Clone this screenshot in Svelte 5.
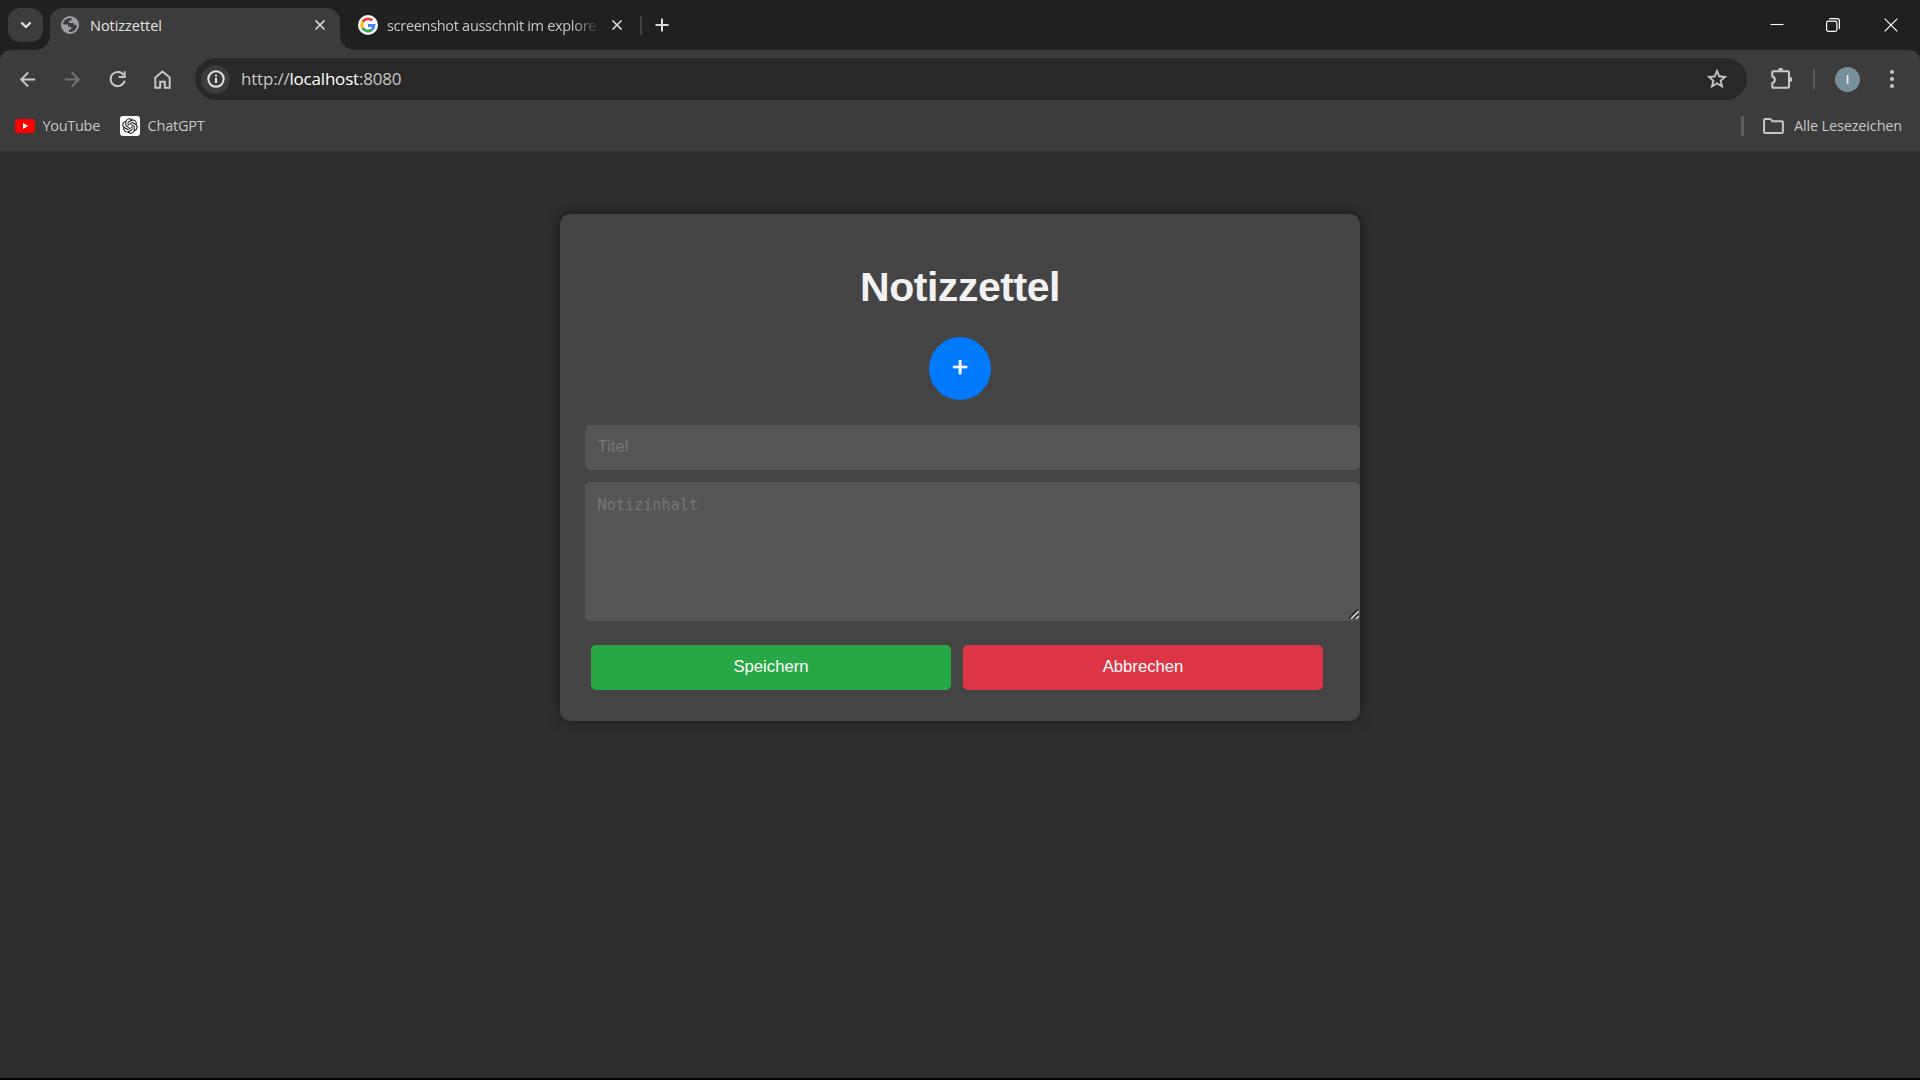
<script>
  let title = $state('');
  let content = $state('');
</script>

{#snippet cross()}
  <svg width="12" height="12" viewBox="0 0 12 12"><path d="M1.5 1.5l9 9M10.5 1.5l-9 9" fill="none" stroke="#dadada" stroke-width="1.7" /></svg>
{/snippet}

<div class="window">
  <header class="strip">
    <button class="search" aria-label="Tabs durchsuchen">
      <svg width="12" height="8" viewBox="0 0 12 8"><path d="M1.4 1.4L6 6l4.600-4.600" fill="none" stroke="#e3e3e3" stroke-width="2.1" /></svg>
    </button>
    <div class="tab active">
      <svg class="globe" width="18" height="18" viewBox="0 0 18 18">
        <circle cx="9" cy="9" r="9" fill="#9aa0a6" />
        <path d="M10.500 2C7 1.400 3 3.700 2 7.500l1 .9h4v2.300h3.200v2.500l-2.200.8v2A7 7 0 0 0 16 9.500l-1-.8h-2.300V6.900H8V4.500h2.500z" fill="#3c3c3c" />
      </svg>
      <span class="label t1">Notizzettel</span>
      {@render cross()}
    </div>
    <div class="tab other">
      <svg class="google" width="20" height="20" viewBox="0 0 20 20">
        <circle cx="10" cy="10" r="10" fill="#fff" />
        <g fill="none" stroke-width="2.800">
          <path d="M14.300 5.500A6.100 6.100 0 0 0 4.700 7" stroke="#ea4335" />
          <path d="M4.700 7a6.100 6.100 0 0 0 0 6" stroke="#fbbc05" />
          <path d="M4.700 13a6.100 6.100 0 0 0 9.300 1.600" stroke="#34a853" />
          <path d="M14 14.600a6.100 6.100 0 0 0 2-4.100h-6" stroke="#4285f4" />
        </g>
      </svg>
      <span class="label t2">screenshot ausschnit im explore</span>
      {@render cross()}
    </div>
    <i class="tabsep"></i>
    <svg class="new" width="14" height="14" viewBox="0 0 14 14"><path d="M7 .5v13M.5 7h13" stroke="#dcdcdc" stroke-width="2" /></svg>
    <div class="controls">
      <svg width="14" height="14" viewBox="0 0 14 14"><path d="M.5 6.500h13" stroke="#fff" stroke-width="1.100" /></svg>
      <svg width="14" height="14" viewBox="0 0 14 14" fill="none" stroke="#fff"><rect x=".6" y="3.100" width="10.300" height="10.300" rx="1.800" stroke-width="1.200" /><path d="M3.300 1.100q.3-.5 1.200-.5H11A2.400 2.400 0 0 1 13.400 3v6.600q0 1-.6 1.300" stroke-width="1.200" /></svg>
      <svg width="14" height="14" viewBox="0 0 14 14"><path d="M.7.7l12.600 12.600M13.300.7L.7 13.300" stroke="#fff" stroke-width="1.200" /></svg>
    </div>
  </header>

  <div class="chrome">
    <nav class="toolbar">
      <svg class="ico" width="23" height="23" viewBox="0 0 24 24" fill="#c7c7c7"><path d="M20 11H7.830l5.590-5.590L12 4l-8 8 8 8 1.410-1.410L7.830 13H20z" /></svg>
      <svg class="ico" width="23" height="23" viewBox="0 0 24 24" fill="#757575"><path d="M4 11h12.170l-5.590-5.590L12 4l8 8-8 8-1.410-1.410L16.170 13H4z" /></svg>
      <svg class="ico" width="23" height="23" viewBox="0 0 23 23" fill="none" stroke="#c7c7c7" stroke-width="2"><path d="M17.700 7.200A7.100 7.100 0 1 0 18.600 12.700" /><path d="M18.700 3.200v5.800h-6" /></svg>
      <svg class="ico" width="23" height="23" viewBox="0 0 23 23" fill="none" stroke="#c7c7c7" stroke-width="2"><path d="M4.300 9.400l7.200-5.900 7.200 5.900v10.300h-4.900v-6H9.200v6H4.300z" /></svg>
      <div class="omnibox">
        <span class="info">
          <svg width="18" height="18" viewBox="0 0 18 18"><circle cx="9" cy="9" r="7.700" fill="none" stroke="#e3e3e3" stroke-width="2" /><path d="M8 7.800h2v5.200H8zM8 4.700h2v1.900H8z" fill="#e3e3e3" /></svg>
        </span>
        <span class="url"><span class="scheme">http://</span>localhost<span class="scheme">:8080</span></span>
        <svg class="star" width="24" height="24" viewBox="0 0 24 24" fill="#c7c7c7" stroke="#c7c7c7" stroke-width=".3"><path d="M22 9.240l-7.190-.62L12 2 9.190 8.630 2 9.240l5.460 4.730L5.820 21 12 17.270 18.180 21l-1.630-7.030zM12 15.400l-3.760 2.270 1-4.280-3.320-2.880 4.380-.38L12 6.100l1.710 4.040 4.380.38-3.320 2.880 1 4.280z" /></svg>
      </div>
      <svg class="puzzle" width="22" height="22" viewBox="0 0 22 22"><path d="M2.300 4.200q0-1 1-1H18q1 0 1 1v14.600q0 1-1 1H3.300q-1 0-1-1V15a3.400 3.400 0 0 0 0-6.600z" fill="none" stroke="#c7c7c7" stroke-width="2.100" stroke-linejoin="round" /><path d="M8 2.500a2.700 2.700 0 0 1 5.400 0zM19.500 8.800a2.700 2.700 0 0 1 0 5.400z" fill="#c7c7c7" /></svg>
      <i class="barsep"></i>
      <span class="avatar">I</span>
      <svg class="dots" width="4" height="20" viewBox="0 0 4 20" fill="#c7c7c7"><circle cx="2" cy="3" r="2" /><circle cx="2" cy="10" r="2" /><circle cx="2" cy="17" r="2" /></svg>
    </nav>
    <div class="bookmarks">
      <svg width="20" height="14" viewBox="0 0 20 14"><rect width="20" height="14" rx="3.200" fill="#f00" /><path d="M8 4l5.200 3L8 10z" fill="#fff" /></svg>
      <span class="b1">YouTube</span>
      <svg class="gpt" width="20" height="20" viewBox="0 0 20 20"><rect width="20" height="20" rx="3" fill="#fff" /><path transform="translate(2.300 2.300) scale(.642)" fill="#111" d="M22.2819 9.8211a5.9847 5.9847 0 0 0-.5157-4.9108 6.0462 6.0462 0 0 0-6.5098-2.9A6.0651 6.0651 0 0 0 4.9807 4.1818a5.9847 5.9847 0 0 0-3.9977 2.9 6.0462 6.0462 0 0 0 .7427 7.0966 5.98 5.98 0 0 0 .511 4.9107 6.051 6.051 0 0 0 6.5146 2.9001A5.9847 5.9847 0 0 0 13.2599 24a6.0557 6.0557 0 0 0 5.7718-4.2058 5.9894 5.9894 0 0 0 3.9977-2.9001 6.0557 6.0557 0 0 0-.7475-7.0729zm-9.022 12.6081a4.4755 4.4755 0 0 1-2.8764-1.0408l.1419-.0804 4.7783-2.7582a.7948.7948 0 0 0 .3927-.6813v-6.7369l2.02 1.1686a.071.071 0 0 1 .038.052v5.5826a4.504 4.504 0 0 1-4.4945 4.4944zm-9.6607-4.1254a4.4708 4.4708 0 0 1-.5346-3.0137l.142.0852 4.783 2.7582a.7712.7712 0 0 0 .7806 0l5.8428-3.3685v2.3324a.0804.0804 0 0 1-.0332.0615L9.74 19.9502a4.4992 4.4992 0 0 1-6.1408-1.6464zM2.3408 7.8956a4.485 4.485 0 0 1 2.3655-1.9728V11.6a.7664.7664 0 0 0 .3879.6765l5.8144 3.3543-2.0201 1.1685a.0757.0757 0 0 1-.071 0l-4.8303-2.7865A4.504 4.504 0 0 1 2.3408 7.872zm16.5963 3.8558L13.1038 8.364 15.1192 7.2a.0757.0757 0 0 1 .071 0l4.8303 2.7913a4.4944 4.4944 0 0 1-.6765 8.1042v-5.6772a.79.79 0 0 0-.407-.667zm2.0107-3.0231l-.142-.0852-4.7735-2.7818a.7759.7759 0 0 0-.7854 0L9.409 9.2297V6.8974a.0662.0662 0 0 1 .0284-.0615l4.8303-2.7866a4.4992 4.4992 0 0 1 6.6802 4.66zM8.3065 12.863l-2.02-1.1638a.0804.0804 0 0 1-.038-.0567V6.0742a4.4992 4.4992 0 0 1 7.3757-3.4537l-.142.0805L8.704 5.459a.7948.7948 0 0 0-.3927.6813zm1.0976-2.3654l2.602-1.4998 2.6069 1.4998v2.9994l-2.5974 1.4997-2.6067-1.4997Z" /></svg>
      <span class="b2">ChatGPT</span>
      <i class="marksep"></i>
      <svg class="folder" width="21" height="16" viewBox="0 0 21 16"><path d="M1.100 2.100q0-1 1-1h5.300l2.200 2.200h9.300q1 0 1 1v9.600q0 1-1 1H2.100q-1 0-1-1z" fill="none" stroke="#c7c7c7" stroke-width="2" stroke-linejoin="round" /></svg>
      <span class="b3">Alle Lesezeichen</span>
    </div>
  </div>

  <main>
    <section class="card">
      <h1>Notizzettel</h1>
      <button class="add">+</button>
      <input placeholder="Titel" bind:value={title} />
      <div class="field">
        <textarea placeholder="Notizinhalt" bind:value={content}></textarea>
        <svg class="grip" width="10" height="10" viewBox="0 0 10 10" fill="none"><path d="M0 9.500L9 .5M5 9.500l4.500-4.500" stroke="#1e1e1e" stroke-width="1.500" /><path d="M2 9.800L9.800 2M7 9.800L9.800 7" stroke="#cfcfcf" stroke-width="1.700" /></svg>
      </div>
      <div class="actions">
        <button class="save">Speichern</button>
        <button class="cancel">Abbrechen</button>
      </div>
    </section>
  </main>
</div>

<style>
  :global(body) { margin: 0; background: #000; overflow: hidden; }
  * { box-sizing: border-box; }
  svg, i { display: block; flex: none; }
  button { border: 0; padding: 0; }
  .window { width: 1920px; height: 1080px; display: flex; flex-direction: column; background: #1f2120; font-family: "Open Sans", "Noto Sans", sans-serif; font-size: 14.500px; color: #c7c7c7; white-space: nowrap; border-bottom: 2px solid #000; }

  .strip { height: 50px; display: flex; align-items: center; padding-left: 8px; flex: none; }
  .search { width: 35px; height: 34px; border-radius: 12px; background: #3c3c3c; display: grid; place-items: center; }
  .tab { display: flex; align-items: center; }
  .active { position: relative; align-self: flex-end; width: 290px; height: 42px; margin-left: 7px; padding: 0 14px 8px 11px; border-radius: 13px 13px 0 0; background: #3c3c3c; }
  .active::before, .active::after { content: ""; position: absolute; bottom: 0; width: 14px; height: 14px; }
  .active::before { left: -14px; background: radial-gradient(circle at 0 0, transparent 13.500px, #3c3c3c 14px); }
  .active::after { right: -14px; background: radial-gradient(circle at 100% 0, transparent 13.500px, #3c3c3c 14px); }
  .label { line-height: 24px; padding-top: 1px; }
  .t1 { margin-left: 11px; flex: 1; color: #e3e3e3; letter-spacing: -0.040px; }
  .other { width: 265px; margin-left: 18px; }
  .t2 { width: 211px; margin: 0 14px 0 9px; letter-spacing: -0.300px; mask-image: linear-gradient(90deg, #000 185px, transparent 213px); }
  .tabsep { width: 2px; height: 19px; background: #424343; margin-left: 17px; }
  .new { margin-left: 13px; }
  .controls { display: flex; gap: 43px; margin-left: auto; padding-right: 22px; }
  .controls svg:first-child { margin-right: -1px; }
  .controls svg:nth-child(2) { margin-right: 1px; }

  .chrome { height: 101px; flex: none; background: #3c3c3c; border-radius: 10px 10px 0 0; }
  .toolbar { height: 58px; display: flex; align-items: center; padding-left: 16px; }
  .ico { margin-right: 22px; }
  .omnibox { width: 1552px; height: 42px; margin-left: -1px; border-radius: 21px; background: #282828; display: flex; align-items: center; padding: 0 18px 0 6px; }
  .info { width: 29px; height: 29px; border-radius: 50%; background: #3c3c3c; display: grid; place-items: center; }
  .url { margin-left: 11px; font-size: 17px; color: #fff; letter-spacing: -0.200px; line-height: 24px; }
  .scheme { color: #c7c7c7; }
  .star { margin-left: auto; }
  .puzzle { margin-left: 23px; }
  .barsep { width: 2px; height: 20px; background: #5c5c5c; margin-left: 21px; }
  .avatar { width: 25px; height: 25px; border-radius: 50%; background: #78909c; color: #fff; font: 13px/25px Roboto, sans-serif; text-align: center; margin-left: 20px; }
  .dots { margin-left: 30px; }

  .bookmarks { height: 36px; display: flex; align-items: center; padding: 0 18px 0 15px; line-height: 24px; }
  .b1 { margin-left: 7.500px; width: 77.500px; letter-spacing: -0.300px; }
  .b2 { margin-left: 7.500px; letter-spacing: -0.200px; }
  .marksep { width: 3px; height: 20px; background: #5c5c5c; margin-left: auto; border-radius: 1px; }
  .folder { margin-left: 19px; }
  .b3 { width: 108px; margin-left: 10px; letter-spacing: -0.160px; }

  main { flex: 1; background: #2e2e2e; padding-top: 63px; border-top: 1px solid #303030; }
  .card { width: 800px; height: 507px; margin: -1px auto 0; padding: 25px; border-radius: 10px; background: #444; box-shadow: 0 0 12.500px rgba(0, 0, 0, .5); font-family: "Liberation Sans", Arial, sans-serif; display: flex; flex-direction: column; }
  h1 { margin: 26px 0 27px; font-size: 41px; letter-spacing: -0.450px; line-height: 45px; text-align: center; color: #f1f1f1; }
  .add { align-self: center; width: 62px; height: 63px; flex: none; border-radius: 50%; background: #007bff; color: #fff; font: 28px/60px "Liberation Sans", Arial, sans-serif; padding-bottom: 3px; -webkit-text-stroke: .6px #fff; }
  input, textarea { width: 775px; border: 0; border-radius: 5px; background: #555; color: #f1f1f1; font-size: 16.670px; outline: 0; flex: none; }
  input { height: 45px; margin-top: 25px; padding: 0 12.500px 2px; font-family: "Liberation Sans", Arial, sans-serif; }
  .field { position: relative; width: 775px; height: 139px; margin-top: 12px; flex: none; }
  textarea { display: block; height: 139px; padding: 13px 12.500px; font: 15.200px/20px "DejaVu Sans Mono", monospace; resize: none; }
  .grip { position: absolute; right: 1px; bottom: 2px; }
  input::placeholder, textarea::placeholder { color: #757575; opacity: 1; }
  .actions { display: flex; gap: 12px; margin: 24px 0 0 6px; }
  .actions button { width: 360px; height: 45px; border-radius: 5px; color: #fff; font: 16.670px/20px "Liberation Sans", Arial, sans-serif; padding-bottom: 2px; }
  .save { background: #28a745; }
  .cancel { background: #dc3545; }
</style>
